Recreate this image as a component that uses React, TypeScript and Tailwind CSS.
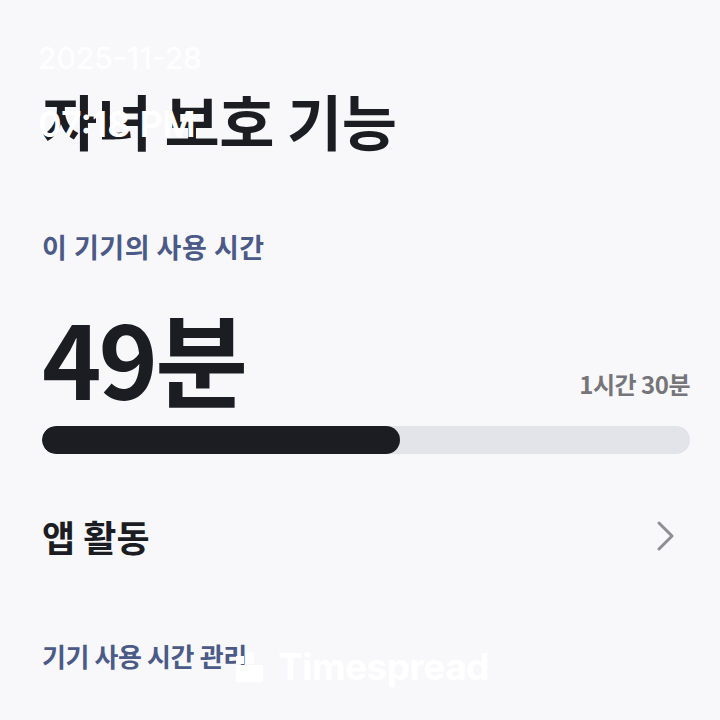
import React from "react";

const FONT = { fontFamily: '"Noto Sans CJK KR", "Noto Sans", sans-serif' };

function Chevron() {
  return (
    <svg width="22" height="30" viewBox="0 0 22 30" fill="none">
      <path d="M4 2 L17 15 L4 28" stroke="#8e8e93" strokeWidth="3" strokeLinecap="round" strokeLinejoin="round" />
    </svg>
  );
}

function LogoMark() {
  return (
    <svg width="28" height="30" viewBox="0 0 28 30" fill="#ffffff">
      <rect x="0" y="4" width="8" height="8" />
      <rect x="0" y="13" width="27" height="17" />
      <rect x="10" y="0" width="8" height="12" opacity="0.8" />
    </svg>
  );
}

export default function App() {
  const used = 49;
  const limit = 90;
  // bar in the screenshot sits slightly past the raw ratio
  const pct = Math.min(100, (used / limit) * 100 + 0.8);

  return (
    <div className="relative h-[720px] w-[720px] overflow-hidden bg-[#f8f8fb] text-[#1c1d22]" style={FONT}>
      <div className="flex flex-col pl-[42px] pr-[30px] pt-[80px]">
        <h1 className="text-[60px] font-bold leading-[80px] tracking-[-0.5px]">자녀 보호 기능</h1>

        <p className="mt-[69px] text-[27px] font-semibold leading-[36px] tracking-[0.5px] text-[#4b5a86]">이 기기의 사용 시간</p>

        <div className="mt-[39px] flex items-end justify-between">
          <span className="text-[101px] font-bold leading-[104px] tracking-[-3px]">49분</span>
          <span className="mb-[9px] text-[24px] font-semibold leading-[30px] tracking-[-0.5px] text-[#75757a]">1시간 30분</span>
        </div>

        <div className="mt-[18px] h-[28px] w-full overflow-hidden rounded-full bg-[#e3e3ea]">
          <div className="h-full rounded-full bg-[#1c1d22]" style={{ width: `${pct}%` }} />
        </div>

        <div className="mt-[58px] flex items-center justify-between">
          <span className="text-[36px] font-bold leading-[48px]">앱 활동</span>
          <span className="mr-[13px]">
            <Chevron />
          </span>
        </div>

        <p className="mt-[78px] text-[26px] font-semibold leading-[36px] tracking-[-0.4px] text-[#4b5a86]">기기 사용 시간 관리</p>
      </div>

      {/* timestamp overlay */}
      <div className="absolute left-[38px] top-[38px] flex flex-col text-white" style={{ fontFamily: '"Inter", "Noto Sans", sans-serif' }}>
        <span className="text-[30px] font-medium leading-[40px] opacity-90">2025-11-28</span>
        <span className="mt-[26px] text-[36px] font-semibold leading-[40px]">07:18 PM</span>
      </div>

      {/* watermark */}
      <div className="absolute left-[236px] top-[645px] flex items-center gap-[14px] text-white">
        <LogoMark />
        <span className="text-[37px] font-bold leading-[44px] tracking-[-0.5px]" style={{ fontFamily: '"Inter", sans-serif' }}>Timespread</span>
      </div>
    </div>
  );
}
